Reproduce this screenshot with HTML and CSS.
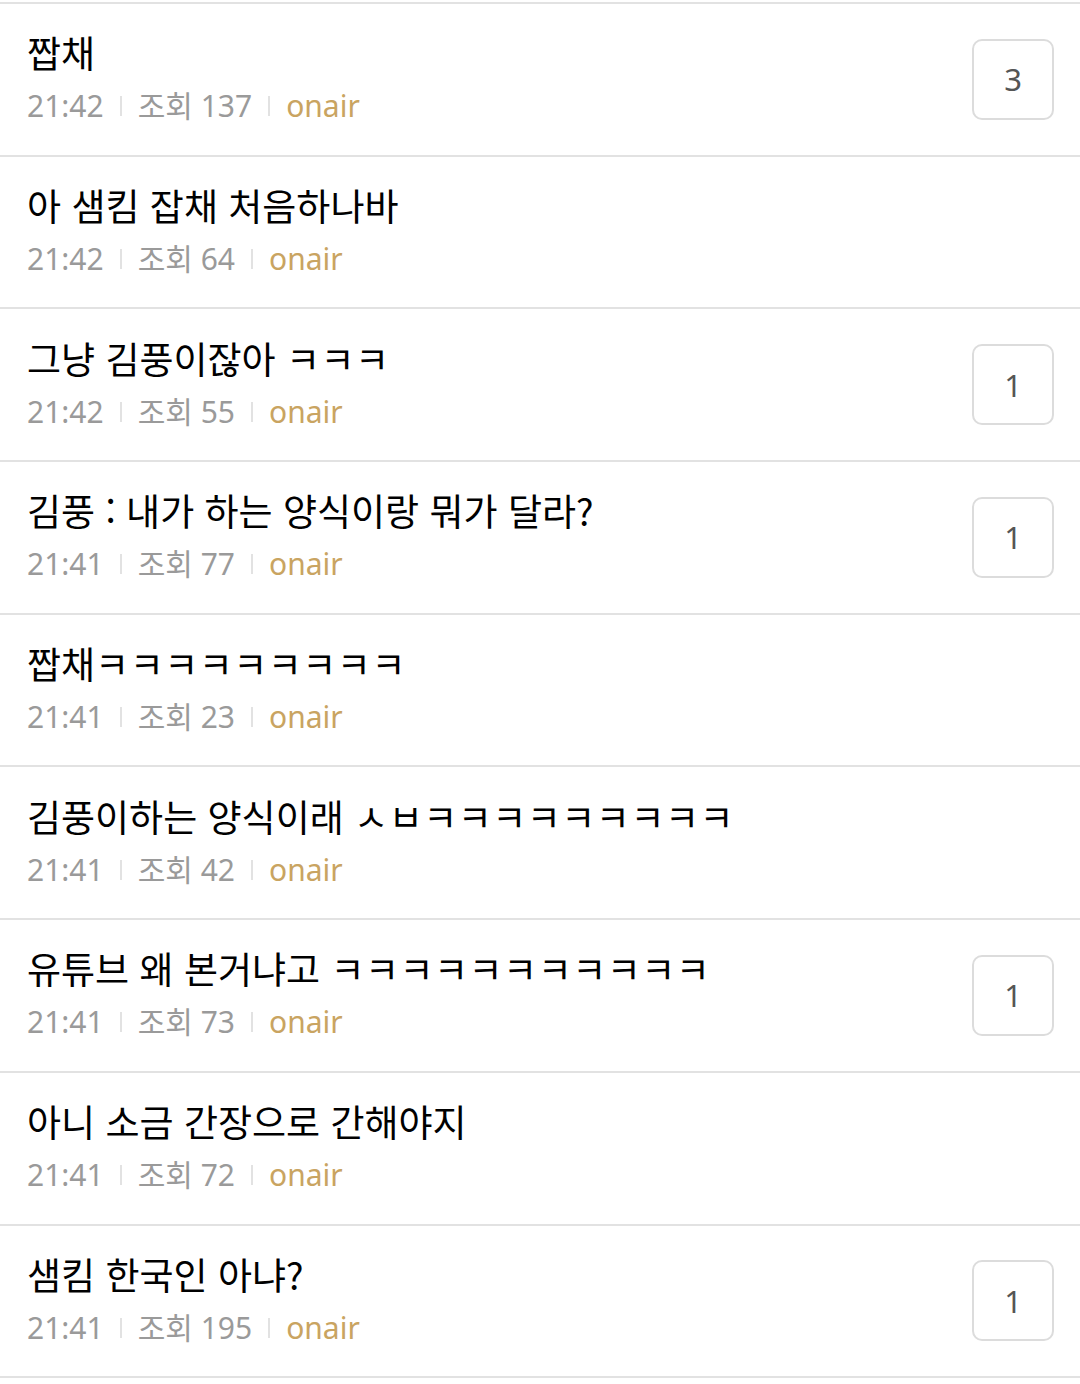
FILE: index.html
```html
<!DOCTYPE html>
<html lang="ko">
<head>
<meta charset="utf-8">
<link rel="stylesheet" href="styles.css">
</head>
<body>
<ul class="list">
  <li class="row">
    <div class="text">
      <div class="title">짭채</div>
      <div class="meta"><span>21:42</span><i class="sep"></i><span>조회 137</span><i class="sep"></i><span class="board">onair</span></div>
    </div>
    <div class="badge">3</div>
  </li>
  <li class="row">
    <div class="text">
      <div class="title">아 샘킴 잡채 처음하나바</div>
      <div class="meta"><span>21:42</span><i class="sep"></i><span>조회 64</span><i class="sep"></i><span class="board">onair</span></div>
    </div>
  </li>
  <li class="row">
    <div class="text">
      <div class="title">그냥 김풍이잖아 <span class="jamo">ㅋㅋㅋ</span></div>
      <div class="meta"><span>21:42</span><i class="sep"></i><span>조회 55</span><i class="sep"></i><span class="board">onair</span></div>
    </div>
    <div class="badge">1</div>
  </li>
  <li class="row">
    <div class="text">
      <div class="title">김풍 : 내가 하는 양식이랑 뭐가 달라?</div>
      <div class="meta"><span>21:41</span><i class="sep"></i><span>조회 77</span><i class="sep"></i><span class="board">onair</span></div>
    </div>
    <div class="badge">1</div>
  </li>
  <li class="row">
    <div class="text">
      <div class="title">짭채<span class="jamo">ㅋㅋㅋㅋㅋㅋㅋㅋㅋ</span></div>
      <div class="meta"><span>21:41</span><i class="sep"></i><span>조회 23</span><i class="sep"></i><span class="board">onair</span></div>
    </div>
  </li>
  <li class="row">
    <div class="text">
      <div class="title">김풍이하는 양식이래 <span class="jamo">ㅅㅂㅋㅋㅋㅋㅋㅋㅋㅋㅋ</span></div>
      <div class="meta"><span>21:41</span><i class="sep"></i><span>조회 42</span><i class="sep"></i><span class="board">onair</span></div>
    </div>
  </li>
  <li class="row">
    <div class="text">
      <div class="title">유튜브 왜 본거냐고 <span class="jamo">ㅋㅋㅋㅋㅋㅋㅋㅋㅋㅋㅋ</span></div>
      <div class="meta"><span>21:41</span><i class="sep"></i><span>조회 73</span><i class="sep"></i><span class="board">onair</span></div>
    </div>
    <div class="badge">1</div>
  </li>
  <li class="row">
    <div class="text">
      <div class="title">아니 소금 간장으로 간해야지</div>
      <div class="meta"><span>21:41</span><i class="sep"></i><span>조회 72</span><i class="sep"></i><span class="board">onair</span></div>
    </div>
  </li>
  <li class="row">
    <div class="text">
      <div class="title">샘킴 한국인 아냐?</div>
      <div class="meta"><span>21:41</span><i class="sep"></i><span>조회 195</span><i class="sep"></i><span class="board">onair</span></div>
    </div>
    <div class="badge">1</div>
  </li>
</ul>
</body>
</html>
```
FILE: styles.css
```css
html, body {
  margin: 0;
  padding: 0;
  background: #fff;
}
body {
  padding-top: 2px;
  font-family: "Noto Sans CJK KR", "Noto Sans", sans-serif;
}
.list {
  list-style: none;
  margin: 0;
  padding: 0;
  border-top: 2px solid #e2e2e2;
}
.row {
  height: 152.7px;
  box-sizing: border-box;
  border-bottom: 2px solid #e2e2e2;
  display: flex;
  align-items: center;
  padding: 0 26px 0 27px;
}
.text {
  flex: 1;
  display: flex;
  flex-direction: column;
}
.title {
  font-family: "Noto Sans CJK KR", sans-serif;
  font-size: 37px;
  line-height: 54px;
  color: #000;
  white-space: nowrap;
}
.jamo {
  letter-spacing: 0.5px;
}
.meta {
  font-family: "Noto Sans", "Noto Sans CJK KR", sans-serif;
  font-size: 30px;
  line-height: 54px;
  color: #9a9a9a;
  display: flex;
  align-items: center;
}
.sep {
  display: inline-block;
  width: 2px;
  height: 20px;
  background: #e2e2e2;
  margin: 0 16px;
}
.board {
  color: #c9a461;
}
.badge {
  box-sizing: border-box;
  width: 82px;
  height: 81px;
  border: 2px solid #dcdcdc;
  border-radius: 10px;
  display: flex;
  align-items: center;
  justify-content: center;
  font-family: "Noto Sans", sans-serif;
  font-size: 31px;
  color: #555;
}
```
